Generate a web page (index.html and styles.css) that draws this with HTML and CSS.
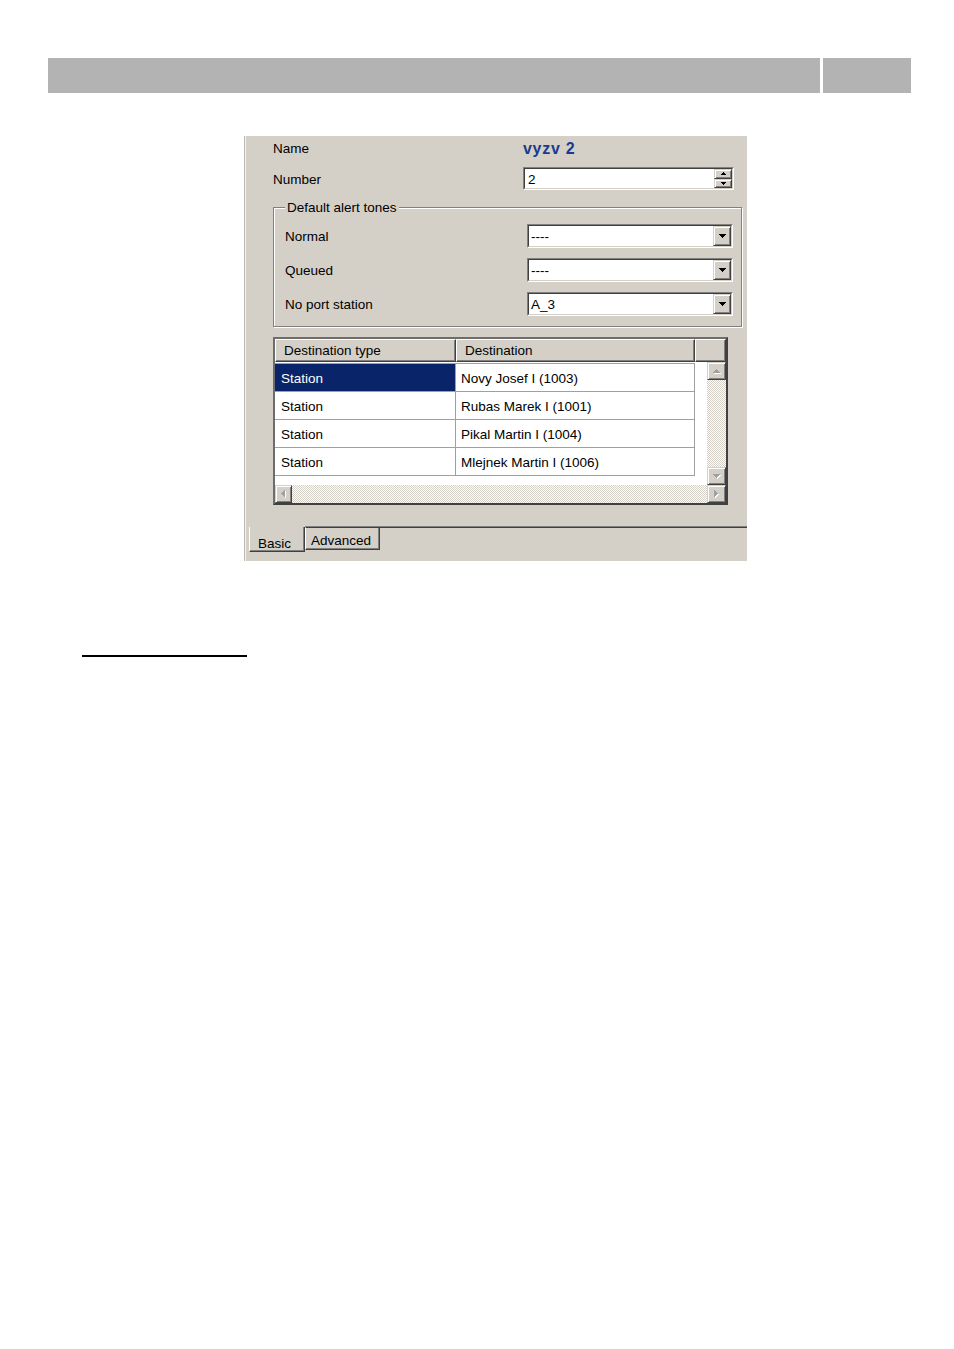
FILE: index.html
```html
<!DOCTYPE html>
<html lang="en">
<head>
<meta charset="utf-8">
<title>Dialog</title>
<link rel="stylesheet" href="styles.css">
</head>
<body>
<div class="page">
  <div class="topbar"><div class="bar-main"></div><div class="bar-side"></div></div>

  <div class="dialog">
    <div class="panel">
      <div class="row row-name"><span class="lbl">Name</span><span class="name-val">vyzv 2</span></div>
      <div class="row row-number"><span class="lbl">Number</span>
        <div class="field num"><div class="field-in">
          <span class="field-text">2</span>
          <div class="spin-btns">
            <div class="btn sbtn"><svg width="5" height="3" viewBox="0 0 5 3"><path d="M2 0h1v1h1v1h1v1h-5v-1h1v-1h1z"/></svg></div>
            <div class="btn sbtn"><svg width="5" height="3" viewBox="0 0 5 3"><path d="M0 0h5v1h-1v1h-1v1h-1v-1h-1v-1h-1z"/></svg></div>
          </div>
        </div></div>
      </div>

      <div class="group">
        <div class="legend">Default alert tones</div>
        <div class="grow first"><span class="lbl">Normal</span>
          <div class="field combo"><div class="field-in"><span class="field-text ctext">----</span>
            <div class="btn dropbtn"><svg width="7" height="4" viewBox="0 0 7 4"><path d="M0 0h7v1h-1v1h-1v1h-1v1h-1v-1h-1v-1h-1v-1h-1z"/></svg></div></div></div>
        </div>
        <div class="grow"><span class="lbl">Queued</span>
          <div class="field combo"><div class="field-in"><span class="field-text ctext">----</span>
            <div class="btn dropbtn"><svg width="7" height="4" viewBox="0 0 7 4"><path d="M0 0h7v1h-1v1h-1v1h-1v1h-1v-1h-1v-1h-1v-1h-1z"/></svg></div></div></div>
        </div>
        <div class="grow"><span class="lbl">No port station</span>
          <div class="field combo"><div class="field-in"><span class="field-text ctext">A_3</span>
            <div class="btn dropbtn"><svg width="7" height="4" viewBox="0 0 7 4"><path d="M0 0h7v1h-1v1h-1v1h-1v1h-1v-1h-1v-1h-1v-1h-1z"/></svg></div></div></div>
        </div>
      </div>

      <div class="list">
        <div class="lhead">
          <div class="hcell">Destination type</div>
          <div class="hcell">Destination</div>
          <div class="hcell"></div>
        </div>
        <div class="lbody">
          <div class="rows">
            <div class="rows-in">
              <div class="lrow"><div class="cell c1 sel">Station</div><div class="cell c2">Novy Josef I (1003)</div></div>
              <div class="lrow"><div class="cell c1">Station</div><div class="cell c2">Rubas Marek I (1001)</div></div>
              <div class="lrow"><div class="cell c1">Station</div><div class="cell c2">Pikal Martin I (1004)</div></div>
              <div class="lrow"><div class="cell c1">Station</div><div class="cell c2">Mlejnek Martin I (1006)</div></div>
            </div>
          </div>
          <div class="vscroll">
            <div class="btn sb-v"><svg width="8" height="5" viewBox="0 0 8 5"><path fill="#fff" d="M4 1h1v1h1v1h1v1h1v1h-7v-1h1v-1h1v-1h1z"/><path fill="#a0a0a0" d="M3 0h1v1h1v1h1v1h1v1h-7v-1h1v-1h1z"/></svg></div>
            <div class="track"></div>
            <div class="btn sb-v"><svg width="8" height="5" viewBox="0 0 8 5"><path fill="#fff" d="M1 1h7v1h-1v1h-1v1h-1v1h-1v-1h-1v-1h-1z"/><path fill="#a0a0a0" d="M0 0h7v1h-1v1h-1v1h-1v1h-1v-1h-1v-1h-1z"/></svg></div>
          </div>
          <div class="hscroll">
            <div class="btn sb-l"><svg width="5" height="8" viewBox="0 0 5 8"><path fill="#fff" d="M4 1h1v7h-1v-1h-1v-1h-1v-1h-1v-1h1v-1h1v-1h1z"/><path fill="#a0a0a0" d="M3 0h1v7h-1v-1h-1v-1h-1v-1h-1v-1h1v-1h1v-1h1z"/></svg></div>
            <div class="track"></div>
            <div class="btn sb-r"><svg width="5" height="8" viewBox="0 0 5 8"><path fill="#fff" d="M1 1h1v1h1v1h1v1h1v1h-1v1h-1v1h-1v1h-1z"/><path fill="#a0a0a0" d="M0 0h1v1h1v1h1v1h1v1h-1v1h-1v1h-1v1h-1z"/></svg></div>
          </div>
        </div>
      </div>
    </div>

    <div class="tabs">
      <div class="tab-gap"></div>
      <div class="tab tab-basic">Basic</div>
      <div class="tab tab-adv">Advanced</div>
      <div class="tab-fill"></div>
    </div>
  </div>

  <div class="rule"></div>
</div>
</body>
</html>
```
FILE: styles.css
```css
* { box-sizing: border-box; }
html, body { margin: 0; padding: 0; background: #fff; }
body {
  font-family: "Liberation Sans", Arial, sans-serif;
  font-size: 13.5px;
  color: #000;
}
.page { padding-top: 58px; width: 954px; }

.topbar { display: flex; gap: 3px; margin-left: 48px; height: 35px; }
.bar-main { width: 772px; background: #b3b3b3; }
.bar-side { width: 88px; background: #b3b3b3; }

.dialog {
  margin: 43px 0 0 244px;
  width: 503px;
  height: 425px;
  background: #d4d0c8;
  border-left: 1px solid #bcb9b2;
  box-shadow: inset 1px 0 0 #f3f2ee;
  display: flex;
  flex-direction: column;
}
.panel { height: 391px; padding-left: 28px; }

.row { display: grid; grid-template-columns: 250px 211px; align-items: center; }
.row-name { height: 24px; }
.row-number { height: 23px; margin-top: 7px; }
.lbl { line-height: 16px; padding-top: 2px; }
.name-val {
  font-weight: bold;
  font-size: 16px;
  letter-spacing: 0.7px;
  color: #1b3a8e;
  line-height: 16px;
  padding-top: 1px;
}

.field {
  border: 1px solid;
  border-color: #808080 #fff #fff #808080;
}
.field-in {
  border: 1px solid;
  border-color: #404040 #d4d0c8 #d4d0c8 #404040;
  background: #fff;
  height: 100%;
  display: flex;
  align-items: stretch;
}
.field-text { flex: 1; padding: 1px 0 0 3px; line-height: 19px; }
.num { height: 23px; }
.combo { height: 24px; }
.ctext { padding: 1px 0 0 2px; line-height: 20px; }

.btn {
  background: #d4d0c8;
  border: 1px solid;
  border-color: #d4d0c8 #404040 #404040 #d4d0c8;
  box-shadow: inset 1px 1px 0 #fff, inset -1px -1px 0 #808080;
  display: flex;
  align-items: center;
  justify-content: center;
}
.btn svg { display: block; shape-rendering: crispEdges; }
.spin-btns { width: 18px; display: flex; flex-direction: column; }
.sbtn { flex: 1; }
.dropbtn { width: 18px; }

.group {
  margin-top: 17px;
  width: 469px;
  height: 120px;
  border: 1px solid #808080;
  box-shadow: inset 1px 1px 0 #fff, 1px 1px 0 #fff;
  padding: 0 8px 0 11px;
}
.legend {
  width: fit-content;
  margin: -9px 0 0 0;
  padding: 1px 2px 0;
  line-height: 16px;
  height: 16px;
  background: #d4d0c8;
}
.grow {
  display: grid;
  grid-template-columns: 242px 206px;
  align-items: center;
  height: 24px;
  margin-top: 10px;
}
.grow.first { margin-top: 9px; }

.list {
  margin-top: 10px;
  width: 455px;
  height: 168px;
  border: 2px solid;
  border-color: #6d6d6d #404040 #404040 #6d6d6d;
  background: #fff;
}
.lhead { display: grid; grid-template-columns: 181px 239px 31px; height: 23px; }
.hcell {
  background: #d4d0c8;
  border: 1px solid;
  border-color: #fff #404040 #404040 #fff;
  box-shadow: inset -1px -1px 0 #808080;
  padding: 1px 0 0 8px;
  line-height: 20px;
  white-space: nowrap;
}
.lbody { display: grid; grid-template-columns: 432px 19px; grid-template-rows: 123px 18px; }
.rows { padding-top: 1px; background: #fff; }
.rows-in { width: 420px; border-top: 1px solid #a0a0a0; }
.lrow {
  display: grid;
  grid-template-columns: 181px 239px;
  height: 28px;
  border-bottom: 1px solid #a0a0a0;
}
.cell { padding-top: 2px; line-height: 25px; border-right: 1px solid #a0a0a0; white-space: nowrap; }
.c1 { padding-left: 6px; }
.c2 { padding-left: 5px; }
.sel { background: #0a246a; color: #fff; }

.vscroll { display: flex; flex-direction: column; }
.sb-v { height: 18px; }
.hscroll { grid-column: 1 / -1; display: flex; }
.sb-l { width: 17px; }
.sb-r { width: 19px; }
.track {
  flex: 1;
  background: repeating-conic-gradient(#d4d0c8 0 25%, #fff 0 50%) 0 0 / 2px 2px;
}

.tabs { display: flex; height: 34px; align-items: flex-start; }
.tab-gap { width: 4px; }
.tab { line-height: 16px; white-space: nowrap; }
.tab-basic {
  width: 56px;
  height: 25px;
  border-left: 1px solid #fff;
  border-right: 1px solid #404040;
  border-bottom: 1px solid #404040;
  box-shadow: inset -1px -1px 0 #808080;
  padding: 9px 0 0 8px;
}
.tab-adv {
  width: 75px;
  height: 23px;
  border: 1px solid;
  border-color: #404040 #404040 #404040 #fff;
  box-shadow: 0 -1px 0 #808080, inset -1px -1px 0 #808080;
  padding: 5px 0 0 5px;
}
.tab-fill {
  flex: 1;
  height: 2px;
  border-top: 1px solid #404040;
  box-shadow: 0 -1px 0 #808080;
}

.rule { margin: 94px 0 0 82px; width: 165px; height: 2px; background: #000; }
```
